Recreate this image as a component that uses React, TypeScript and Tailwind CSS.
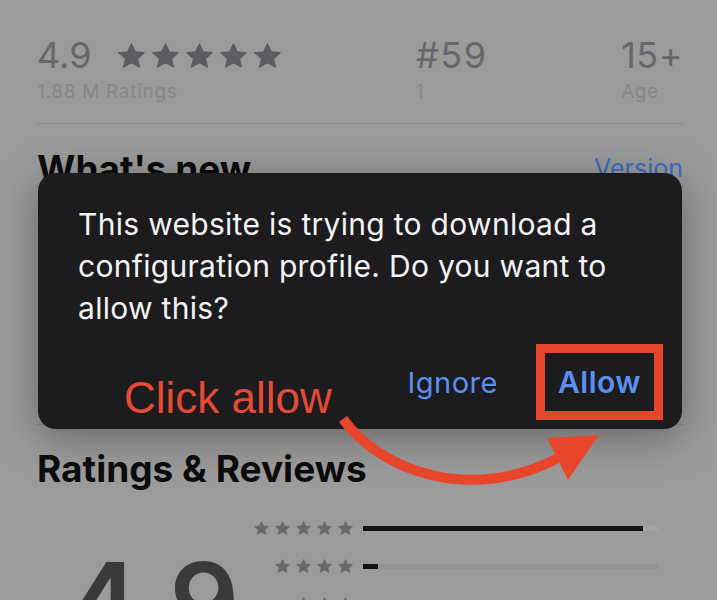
import React from "react";

const Star = ({ className }: { className?: string }) => (
  <svg viewBox="0 -2 100 95" preserveAspectRatio="none" className={className} fill="currentColor">
    <polygon
      points="50,2 63.5,31.4 96.5,34.9 71.9,57.1 79,89 50,73 21,89 28.1,57.1 3.5,34.9 36.5,31.4"
      stroke="currentColor"
      strokeWidth="5"
      strokeLinejoin="round"
    />
  </svg>
);

const StarRow = ({ n }: { n: number }) => (
  <div className="flex w-[100px] justify-end gap-[6px] text-[#68686c]">
    {Array.from({ length: n }).map((_, i) => (
      <Star key={i} className="h-[14px] w-[15px]" />
    ))}
  </div>
);

const Bar = ({ pct, track }: { pct: number; track: string }) => (
  <div className={`ml-[10px] h-[5px] w-[295px] ${track}`}>
    <div className="h-full bg-[#141414]" style={{ width: `${pct}%` }} />
  </div>
);

export default function App() {
  return (
    <div className="relative h-[600px] w-[717px] overflow-hidden bg-[#9b9b9b] font-['Inter',sans-serif]">
      {/* background page */}
      <div className="pl-[37px] pr-[34px] pt-[37px]">
        <div className="flex items-start">
          <div className="w-[379px]">
            <div className="flex items-center">
              <span className="text-[36px] leading-[36px] text-[#67676b]">4.9</span>
              <div className="ml-[26px] flex gap-[7px] text-[#5c5c61]">
                {[0, 1, 2, 3, 4].map((i) => (
                  <Star key={i} className="h-[25px] w-[27px]" />
                ))}
              </div>
            </div>
            <div className="mt-[7px] text-[19px] leading-[24px] tracking-[0.7px] text-[#86868a]">1.88 M Ratings</div>
          </div>
          <div className="flex-1">
            <div className="text-[36px] leading-[36px] tracking-[1.5px] text-[#67676b]">#59</div>
            <div className="mt-[7px] text-[19px] leading-[24px] text-[#86868a]">1</div>
          </div>
          <div>
            <div className="text-[36px] leading-[36px] tracking-[0.5px] text-[#67676b]">15+</div>
            <div className="mt-[7px] text-[19px] leading-[24px] tracking-[0.6px] text-[#86868a]">Age</div>
          </div>
        </div>
        <div className="mt-[19px] h-px bg-[#8b8b8b]" />
        <div className="mt-[26px] flex items-start justify-between">
          <span className="text-[37px] font-bold leading-[37px] text-[#0b0b0b]">What's new</span>
          <span className="text-[25px] leading-[37px] text-[#3b6dc3]">Version</span>
        </div>
        <div className="mt-[237px] h-px bg-[#8b8b8b]" />
        <div className="mt-[25px] text-[37px] font-bold leading-[37px] text-[#0d0d0d]">Ratings &amp; Reviews</div>
        <div className="mt-[22px] flex items-start">
          <div className="w-[216px] pl-[30px]">
            <div className="mt-[38px] text-[109px] font-semibold leading-[109px] text-[#3a3a3c]">4.9</div>
          </div>
          <div className="flex flex-col">
            <div className="flex h-[38px] items-center">
              <StarRow n={5} />
              <Bar pct={95} track="bg-[#a2a2a2]" />
            </div>
            <div className="flex h-[38px] items-center">
              <StarRow n={4} />
              <Bar pct={5} track="bg-[#939393]" />
            </div>
            <div className="flex h-[38px] items-center">
              <StarRow n={3} />
              <Bar pct={1} track="bg-[#939393]" />
            </div>
          </div>
        </div>
      </div>

      {/* dialog */}
      <div className="absolute left-[38px] top-[173px] h-[256px] w-[644px] rounded-[18px] bg-[#1c1c1e] shadow-[0_8px_40px_rgba(0,0,0,0.35)]">
        <div className="pl-[40px] pt-[30px] text-[30px] leading-[42px] tracking-[0.3px] text-[#f3f3f3]">
          This website is trying to download a
          <br />
          configuration profile. Do you want to
          <br />
          allow this?
        </div>
        <div className="mt-[35px] flex items-baseline justify-end gap-[60px] pr-[41px]">
          <span className="text-[29px] leading-[36px] tracking-[0.5px] text-[#5b8ff1]">Ignore</span>
          <span className="text-[30px] font-semibold leading-[36px] tracking-[0.5px] text-[#5b8ff1]">Allow</span>
        </div>
      </div>

      {/* annotations */}
      <div className="absolute left-[536px] top-[344px] h-[76px] w-[127px] border-[9px] border-[#e8462b]" />
      <div className="absolute left-[124px] top-[376px] font-['Liberation_Sans',Arial,sans-serif] text-[44px] leading-[44px] text-[#e54a35]">
        Click allow
      </div>
      <svg className="pointer-events-none absolute left-0 top-0" width="717" height="600" viewBox="0 0 717 600">
        <path d="M343,419 C380,470 470,505 560,457" fill="none" stroke="#e8462b" strokeWidth="10" />
        <polygon points="547,438 599,435 568,480" fill="#e8462b" />
      </svg>
    </div>
  );
}
